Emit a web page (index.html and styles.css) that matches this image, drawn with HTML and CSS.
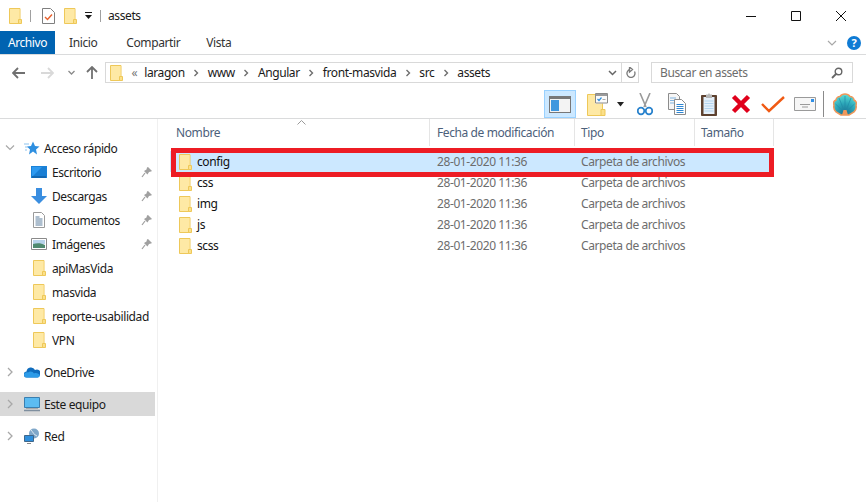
FILE: index.html
```html
<!DOCTYPE html>
<html lang="es">
<head>
  <meta charset="UTF-8" />
  <title>assets</title>
  <link rel="stylesheet" href="styles.css">
</head>
<body>
  <svg class="defs" width="0" height="0">
    <defs>
      <radialGradient id="shell-fill" cx="12" cy="20" r="19" gradientUnits="userSpaceOnUse">
        <stop offset="0" stop-color="#1c6f90"/>
        <stop offset=".5" stop-color="#2ba6b8"/>
        <stop offset="1" stop-color="#5fe0d8"/>
      </radialGradient>
    </defs>
    <symbol id="folder" viewBox="0 0 13 16">
      <path d="M.5.5h10.500v15H.5z" fill="#ffe38f" stroke="#eec859"/>
      <path d="M1 1h9.500v14H1z" fill="#fee9a5"/>
      <path d="M9.500 15.500v-4h3v4z" fill="#fbe08a" stroke="#eec859"/>
    </symbol>
    <symbol id="pin" viewBox="0 0 12 12">
      <path d="M7 1l4 4-1 .6-2 .4-1.500 2.500-3.500-3.500L5.500 3.500 6 1.500z" fill="#a0a0a0"/>
      <path d="M4 7L1 11" stroke="#a0a0a0" stroke-width="1.200"/>
    </symbol>
    <symbol id="chev-right" viewBox="0 0 8 10">
      <path d="M2 1l4 4-4 4" fill="none" stroke="#a8a8a8" stroke-width="1.300"/>
    </symbol>
    <symbol id="crumb" viewBox="0 0 6 8">
      <path d="M1.500 1l3 3-3 3" fill="none" stroke="#6e6e6e" stroke-width="1.400"/>
    </symbol>
  </svg>

  <div class="titlebar">
    <svg class="ico-folder qa-first"><use href="#folder"/></svg>
    <span class="qa-sep"></span>
    <svg class="qa-doc" viewBox="0 0 13 16">
      <path d="M.5.5h8l4 4v11H.5z" fill="#fff" stroke="#7f7f7f"/>
      <path d="M3 9l2.500 2.500L10 6.500" fill="none" stroke="#e8602c" stroke-width="1.400"/>
    </svg>
    <svg class="ico-folder qa-second"><use href="#folder"/></svg>
    <svg class="qa-arrow" viewBox="0 0 7 7">
      <path d="M0 0h7v1H0zM0 3h7L3.500 7z" fill="#1a1a1a"/>
    </svg>
    <span class="qa-sep qa-sep-last"></span>
    <span class="title-text">assets</span>
    <div class="win-controls">
      <svg viewBox="0 0 10 10"><path d="M0 5.500h10" stroke="#111"/></svg>
      <svg viewBox="0 0 10 10"><path d="M.5.500h9v9h-9z" fill="none" stroke="#111"/></svg>
      <svg viewBox="0 0 10 10"><path d="M0 0l10 10M10 0L0 10" stroke="#111"/></svg>
    </div>
  </div>

  <div class="ribbon-tabs">
    <span class="tab tab-file">Archivo</span>
    <span class="tab tab-home">Inicio</span>
    <span class="tab tab-share">Compartir</span>
    <span class="tab tab-view">Vista</span>
    <svg class="ribbon-chev" viewBox="0 0 10 6"><path d="M1 1l4 4 4-4" fill="none" stroke="#a8a8a8" stroke-width="1.200"/></svg>
    <span class="help">?</span>
  </div>

  <div class="navbar">
    <svg class="nav-back" viewBox="0 0 13 12"><path d="M6 1L1 6l5 5M1 6h12" fill="none" stroke="#707070" stroke-width="1.800"/></svg>
    <svg class="nav-forward" viewBox="0 0 13 12"><path d="M7 1l5 5-5 5M12 6H0" fill="none" stroke="#d9d9d9" stroke-width="1.800"/></svg>
    <svg class="nav-down" viewBox="0 0 7 5"><path d="M.5 1l3 3 3-3" fill="none" stroke="#8a8a8a" stroke-width="1.300"/></svg>
    <svg class="nav-up" viewBox="0 0 12 13"><path d="M1 6l5-5 5 5M6 1v12" fill="none" stroke="#707070" stroke-width="1.800"/></svg>
    <div class="address">
      <svg class="ico-folder"><use href="#folder"/></svg>
      <span class="crumb-more">«</span>
      <span>laragon</span>
      <svg class="crumb"><use href="#crumb"/></svg>
      <span>www</span>
      <svg class="crumb"><use href="#crumb"/></svg>
      <span>Angular</span>
      <svg class="crumb"><use href="#crumb"/></svg>
      <span>front-masvida</span>
      <svg class="crumb"><use href="#crumb"/></svg>
      <span>src</span>
      <svg class="crumb"><use href="#crumb"/></svg>
      <span>assets</span>
      <div class="address-end">
        <svg class="addr-chev" viewBox="0 0 9 6"><path d="M1 1l3.500 3.500L8 1" fill="none" stroke="#666" stroke-width="1.500"/></svg>
        <span class="addr-refresh">
          <svg viewBox="0 0 11 12"><path d="M5 2.500a4 4 0 1 0 4.500 2M4.500 0v5L7.500 2.500z" fill="none" stroke="#7a7a7a" stroke-width="1.300"/></svg>
        </span>
      </div>
    </div>
    <div class="search">
      <span>Buscar en assets</span>
      <svg viewBox="0 0 12 12"><circle cx="7.500" cy="4.500" r="3.300" fill="none" stroke="#666" stroke-width="1.400"/><path d="M5 7l-4 4" stroke="#666" stroke-width="1.800"/></svg>
    </div>
  </div>

  <div class="toolbar">
    <span class="tool tool-active">
      <svg width="22" height="17" viewBox="0 0 22 17">
        <path d="M0 0h22v17H0z" fill="#777"/>
        <path d="M1 3h20v13H1z" fill="#f3f3f3"/>
        <path d="M2 4h8v11H2z" fill="#3f97de"/>
      </svg>
    </span>
    <span class="tool tool-new">
      <svg width="21" height="23" viewBox="0 0 21 23">
        <path d="M.5 1.500h15v21H.5z" fill="#fee9a5" stroke="#eec859"/>
        <path d="M14 22.500v-6h4v6z" fill="#fbe08a" stroke="#eec859"/>
        <path d="M8 .5h13v10H8z" fill="#fff"/>
        <path d="M8.500.5h12v9.500h-12z" fill="#fbfbfb" stroke="#8a8a8a"/>
        <path d="M9 1h11v2H9z" fill="#9a9a9a"/>
        <path d="M10.500 6l1.500 1.500 2.500-3" fill="none" stroke="#2f8fdc" stroke-width="1.200"/>
        <path d="M15.500 6.500h3" stroke="#aaa"/>
      </svg>
    </span>
    <svg class="tool-drop" viewBox="0 0 7 5"><path d="M0 0h7L3.500 4.500z" fill="#222"/></svg>
    <span class="tool tool-cut">
      <svg width="16" height="23" viewBox="0 0 16 23">
        <path d="M3 0l6 14M13 0L7 14" stroke="#9a9a9a" stroke-width="1.600"/>
        <circle cx="4" cy="18" r="3.300" fill="none" stroke="#2a83cd" stroke-width="1.800"/>
        <circle cx="12" cy="18" r="3.300" fill="none" stroke="#2a83cd" stroke-width="1.800"/>
      </svg>
    </span>
    <span class="tool tool-copy">
      <svg width="18" height="22" viewBox="0 0 18 22">
        <path d="M.5.500h8l3 3v13H.5z" fill="#f6f6f6" stroke="#8c8c8c"/>
        <path d="M2 5h6M2 7.500h6M2 10h6" stroke="#7fb5e3"/>
        <path d="M6.500 6.500h7l4 4v11h-11z" fill="#fff" stroke="#8c8c8c"/>
        <path d="M8.500 11.500h7M8.500 13.500h7M8.500 15.500h7M8.500 17.500h7M8.500 19.500h7" stroke="#2f86d2"/>
      </svg>
    </span>
    <span class="tool tool-paste">
      <svg width="16" height="23" viewBox="0 0 16 23">
        <path d="M.5 2.500h15v20H.5z" fill="#5e4230" stroke="#5e4230"/>
        <path d="M2.500 4h11v17h-11z" fill="#e5f0fa"/>
        <path d="M3.500 8h9M3.500 10.500h9M3.500 13h9M3.500 15.500h9M3.500 18h9" stroke="#b3d4ee"/>
        <path d="M5 3V1.500h2L8 0l1 1.500h2V5H5z" fill="#b5b5b5"/>
      </svg>
    </span>
    <span class="tool tool-delete">
      <svg width="20" height="20" viewBox="0 0 20 20"><path d="M2.500 2.500l15 15M17.500 2.500l-15 15" stroke="#e0001b" stroke-width="4.500"/></svg>
    </span>
    <span class="tool tool-check">
      <svg width="24" height="17" viewBox="0 0 24 17"><path d="M1 8l7 7L23 1" fill="none" stroke="#f05a14" stroke-width="2.400"/></svg>
    </span>
    <span class="tool tool-mail">
      <svg width="22" height="14" viewBox="0 0 22 14">
        <path d="M.5.500h21v13H.5z" fill="#f6f6f6" stroke="#9a9a9a"/>
        <path d="M17 2h3v3h-3z" fill="#2f8fe6"/>
        <path d="M6 7.500h10M8 10h6" stroke="#9a9a9a"/>
      </svg>
    </span>
    <span class="tool-sep"></span>
    <span class="tool tool-shell">
      <svg width="24" height="23" viewBox="0 0 24 23">
        <path d="M8 22L3 19C1 17 .5 14 1 12c-1-2 0-4 2-5 0-2 2-3.500 4-3.500C8 2 10 1 12 1s4 1 5 2.500c2 0 4 1.500 4 3.500 2 1 3 3 2 5 .5 2 0 5-2 7l-5 3z" fill="url(#shell-fill)" stroke="#f0975a" stroke-width="1.500"/>
        <path d="M12 20L12 3M12 20L6 5M12 20L18 5M12 20L2.500 11M12 20L21.500 11" stroke="#1f8ba6" stroke-width=".7"/>
        <path d="M9 22h6l-1.500-5h-3z" fill="#f0975a"/>
      </svg>
    </span>
  </div>

  <div class="main">
    <nav class="sidebar">
      <div class="side-row">
        <svg class="twist" viewBox="0 0 10 8"><path d="M1 1.500l4 4 4-4" fill="none" stroke="#a8a8a8" stroke-width="1.200"/></svg>
        <svg class="side-ico" viewBox="0 0 16 16">
          <path d="M9 1.500l2 4.500 4.500.5-3.500 3 1 5L9 11.500 5 14.500l1-5-3-3 4-.5z" fill="#2e8fe0"/>
          <path d="M0 4h5M1 7h3M1 10h2" stroke="#8cc2ee"/>
        </svg>
        <span>Acceso rápido</span>
      </div>
      <div class="side-row sub pinned">
        <svg class="sub-ico" viewBox="0 0 16 16"><path d="M0 2h16v12H0z" fill="#1a82d8"/><path d="M1 3h14v9H1z" fill="#2e9af0"/><path d="M2 12l9-9h4v9z" fill="#1a7fd4"/><path d="M1 13h14" stroke="#0c4f8c"/></svg>
        <span>Escritorio</span>
        <svg class="pin"><use href="#pin"/></svg>
      </div>
      <div class="side-row sub pinned">
        <svg class="sub-ico" viewBox="0 0 16 16"><path d="M5 0h6v8h5l-8 8-8-8h5z" fill="#3a8ee0"/></svg>
        <span>Descargas</span>
        <svg class="pin"><use href="#pin"/></svg>
      </div>
      <div class="side-row sub pinned">
        <svg class="sub-ico" viewBox="0 0 16 16"><path d="M2.500.5h8l3 3v12h-11z" fill="#fff" stroke="#9a9a9a"/><path d="M4.500 5h4M4.500 7h7M4.500 9h7M4.500 11h7M4.500 13h7" stroke="#5c7f9e"/></svg>
        <span>Documentos</span>
        <svg class="pin"><use href="#pin"/></svg>
      </div>
      <div class="side-row sub pinned">
        <svg class="sub-ico" viewBox="0 0 16 16"><path d="M.5 2.500h15v11H.5z" fill="#fff" stroke="#8a8a8a"/><path d="M2 4h12v4H2z" fill="#b7d3ea"/><path d="M2 8c4-1 8-1 12 1v3H2z" fill="#4f8a6f"/></svg>
        <span>Imágenes</span>
        <svg class="pin"><use href="#pin"/></svg>
      </div>
      <div class="side-row sub">
        <svg class="sub-ico side-folder"><use href="#folder"/></svg>
        <span>apiMasVida</span>
      </div>
      <div class="side-row sub">
        <svg class="sub-ico side-folder"><use href="#folder"/></svg>
        <span>masvida</span>
      </div>
      <div class="side-row sub">
        <svg class="sub-ico side-folder"><use href="#folder"/></svg>
        <span>reporte-usabilidad</span>
      </div>
      <div class="side-row sub">
        <svg class="sub-ico side-folder"><use href="#folder"/></svg>
        <span>VPN</span>
      </div>
      <div class="side-row group">
        <svg class="twist twist-closed"><use href="#chev-right"/></svg>
        <svg class="side-ico" viewBox="0 0 16 11"><path d="M3 11a3 3 0 0 1-.5-6 4.500 4.500 0 0 1 8.500-1.500A3.500 3.500 0 0 1 16 8c0 1.500-1 3-2.500 3z" fill="#0f6cbd"/><path d="M3 11c-2 0-3-1.500-3-3 0-1 2-3 4-2 2-2 5-1 6 1 2-1 5 0 6 2-.5 1-1.500 2-2.500 2z" fill="#2c9be8"/></svg>
        <span>OneDrive</span>
      </div>
      <div class="side-row group active">
        <svg class="twist twist-closed"><use href="#chev-right"/></svg>
        <svg class="side-ico" viewBox="0 0 16 16"><path d="M.5 1.500h15v10H.5z" fill="#5cbcf2" stroke="#3a7fb0"/><path d="M2 12.500h12" stroke="#aaa"/><path d="M0 14.500h16" stroke="#7f8f9f" stroke-width="1.500"/></svg>
        <span>Este equipo</span>
      </div>
      <div class="side-row group">
        <svg class="twist twist-closed"><use href="#chev-right"/></svg>
        <svg class="side-ico" viewBox="0 0 16 16"><circle cx="10" cy="5.500" r="5" fill="#7fa7c9"/><path d="M7 2c2 2 3 5 6 6" stroke="#dfe9f2" fill="none"/><path d="M.5 7.500h9v6h-9z" fill="#2f8fdc" stroke="#40678a"/><path d="M3 15.500h4" stroke="#8a8a8a"/></svg>
        <span>Red</span>
      </div>
    </nav>

    <section class="files">
      <div class="sort-mark"><svg viewBox="0 0 9 5"><path d="M.5 4.500l4-4 4 4" fill="none" stroke="#9a9a9a"/></svg></div>
      <div class="file-head">
        <span>Nombre</span>
        <span>Fecha de modificación</span>
        <span>Tipo</span>
        <span>Tamaño</span>
      </div>
      <div class="file-list">
        <div class="highlight"></div>
        <div class="file-row selected">
          <span class="file-name"><svg class="ico-file"><use href="#folder"/></svg><b>config</b></span>
          <span>28-01-2020 11:36</span>
          <span>Carpeta de archivos</span>
        </div>
        <div class="file-row">
          <span class="file-name"><svg class="ico-file"><use href="#folder"/></svg><b>css</b></span>
          <span>28-01-2020 11:36</span>
          <span>Carpeta de archivos</span>
        </div>
        <div class="file-row">
          <span class="file-name"><svg class="ico-file"><use href="#folder"/></svg><b>img</b></span>
          <span>28-01-2020 11:36</span>
          <span>Carpeta de archivos</span>
        </div>
        <div class="file-row">
          <span class="file-name"><svg class="ico-file"><use href="#folder"/></svg><b>js</b></span>
          <span>28-01-2020 11:36</span>
          <span>Carpeta de archivos</span>
        </div>
        <div class="file-row">
          <span class="file-name"><svg class="ico-file"><use href="#folder"/></svg><b>scss</b></span>
          <span>28-01-2020 11:36</span>
          <span>Carpeta de archivos</span>
        </div>
      </div>
    </section>
  </div>
</body>
</html>
```

FILE: styles.css
```css
* {
  box-sizing: border-box;
}

html,
body {
  height: 100%;
}

body {
  margin: 0;
  background: #fff;
  color: #1a1a1a;
  font-family: "Noto Sans", "Open Sans", sans-serif;
  font-size: 12px;
  letter-spacing: -0.4px;
  white-space: nowrap;
  overflow: hidden;
}

svg {
  display: block;
  flex: none;
}

.defs {
  position: absolute;
}

/* title bar */
.titlebar {
  display: flex;
  align-items: center;
  height: 31px;
  padding-left: 9px;
}

.ico-folder {
  width: 13px;
  height: 16px;
}

.qa-sep {
  width: 1px;
  height: 12px;
  margin: 0 11px 0 8px;
  background: #a0a0a0;
}

.qa-doc {
  width: 13px;
  height: 16px;
}

.qa-second {
  margin-left: 9px;
}

.qa-arrow {
  width: 7px;
  height: 7px;
  margin-left: 8px;
}

.qa-sep-last {
  margin: 0 7px 0 8px;
}

.title-text {
  font-size: 12px;
}

.win-controls {
  display: flex;
  gap: 35px;
  margin-left: auto;
  padding-right: 20px;
}

.win-controls svg {
  width: 10px;
  height: 10px;
}

/* ribbon tabs */
.ribbon-tabs {
  display: flex;
  align-items: center;
  height: 24px;
  border-bottom: 1px solid #dadbdc;
  color: #333;
}

.tab {
  line-height: 23px;
}

.tab-file {
  width: 55px;
  height: 23px;
  background: #0063b1;
  color: #fff;
  text-align: center;
}

.tab-home {
  margin-left: 14px;
}

.tab-share {
  margin-left: 29px;
}

.tab-view {
  margin-left: 26px;
}

.ribbon-chev {
  width: 10px;
  height: 6px;
  margin-left: auto;
}

.help {
  width: 14px;
  height: 14px;
  margin: 0 5px 0 10px;
  border-radius: 50%;
  background: #0f7bd4;
  color: #fff;
  font-size: 11px;
  font-weight: bold;
  line-height: 14px;
  text-align: center;
}

/* nav row */
.navbar {
  display: flex;
  align-items: center;
  height: 35px;
  padding: 7px 13px 7px 12px;
}

.nav-back,
.nav-forward {
  width: 13px;
  height: 12px;
}

.nav-forward {
  margin-left: 16px;
}

.nav-down {
  width: 7px;
  height: 5px;
  margin-left: 14px;
}

.nav-up {
  width: 12px;
  height: 13px;
  margin-left: 11px;
}

.address {
  display: flex;
  align-items: center;
  gap: 8.5px;
  width: 534px;
  height: 21px;
  margin-left: 7px;
  padding-left: 4px;
  border: 1px solid #d9d9d9;
}

.crumb-more {
  margin-right: -1.5px;
  color: #777;
}

.crumb {
  width: 6px;
  height: 8px;
}

.address-end {
  display: flex;
  align-items: center;
  height: 100%;
  margin-left: auto;
}

.addr-chev {
  width: 9px;
  height: 6px;
  margin-right: 4px;
}

.addr-refresh {
  display: flex;
  align-items: center;
  justify-content: center;
  width: 17px;
  height: 100%;
  border-left: 1px solid #d9d9d9;
}

.addr-refresh svg {
  width: 11px;
  height: 12px;
}

.search {
  display: flex;
  align-items: center;
  justify-content: space-between;
  width: 202px;
  height: 21px;
  margin-left: 12px;
  padding: 0 9px 0 8px;
  border: 1px solid #d9d9d9;
  color: #6d6d6d;
}

.search svg {
  width: 12px;
  height: 12px;
}

/* command toolbar */
.toolbar {
  display: flex;
  align-items: center;
  height: 29px;
  padding-left: 544px;
  border-bottom: 1px solid #dadbdc;
}

.tool {
  display: flex;
  align-items: center;
  justify-content: center;
  height: 28px;
}

.tool-active {
  width: 32px;
  background: #cce8ff;
  border: 1px solid #99d1ff;
}

.tool-new {
  width: 21px;
  margin-left: 11px;
}

.tool-drop {
  width: 7px;
  height: 5px;
  margin-left: 9px;
}

.tool-cut {
  width: 16px;
  margin-left: 13px;
}

.tool-copy {
  width: 18px;
  margin-left: 15px;
}

.tool-paste {
  width: 16px;
  margin-left: 15px;
}

.tool-delete {
  width: 20px;
  margin-left: 14px;
}

.tool-check {
  width: 24px;
  margin-left: 10px;
}

.tool-mail {
  width: 22px;
  margin-left: 9px;
}

.tool-sep {
  width: 1px;
  height: 26px;
  margin-left: 7px;
  background: #8a8a8a;
}

.tool-shell {
  width: 24px;
  margin-left: 9px;
}

/* sidebar and file list */
.main {
  display: flex;
  height: 383px;
}

.sidebar {
  width: 158px;
  padding-top: 17px;
  border-right: 1px solid #f0f0f0;
}

.side-row {
  display: flex;
  align-items: center;
  width: 155px;
  height: 24px;
  padding-left: 5px;
}

.sub {
  padding-left: 31px;
}

.twist {
  width: 10px;
  height: 8px;
}

.twist-closed {
  height: 10px;
}

.side-ico {
  width: 16px;
  height: 16px;
  margin: 0 4px 0 9px;
}

.sub-ico {
  width: 16px;
  height: 16px;
  margin-right: 5px;
}

.side-folder {
  width: 13px;
  margin-left: 2px;
  margin-right: 6px;
}

.pin {
  width: 12px;
  height: 12px;
  margin-left: auto;
  margin-right: 2px;
}

.group {
  margin-top: 8px;
}

.active {
  background: #d9d9d9;
}

.files {
  position: relative;
  width: 616px;
  padding-left: 12px;
}

.sort-mark {
  position: absolute;
  top: 1px;
  left: 139px;
}

.sort-mark svg {
  width: 9px;
  height: 5px;
}

.file-head,
.file-row {
  display: grid;
  grid-template-columns: 260px 145px 120px 79px;
  align-items: center;
}

.file-head {
  height: 26px;
  color: #4c607a;
}

.file-head span {
  height: 100%;
  padding: 1px 0 0 6px;
  border-right: 1px solid #e5e5e5;
  line-height: 26px;
}

.file-head span:nth-child(2),
.file-row span:nth-child(2) {
  padding-left: 7px;
}

.file-list {
  position: relative;
  margin-top: 6px;
}

.file-row {
  height: 21px;
  color: #6d6d6d;
}

.file-row span {
  padding-left: 6px;
}

.file-name {
  display: flex;
  align-items: center;
}

.file-name b {
  color: #111;
  font-weight: normal;
}

.ico-file {
  width: 13px;
  height: 16px;
  margin: 0 5px 0 3px;
}

.selected {
  background: #cce8ff;
}

.highlight {
  position: absolute;
  top: -3px;
  left: 1px;
  width: 603px;
  height: 29px;
  border: 5px solid #ed1c24;
}
```
